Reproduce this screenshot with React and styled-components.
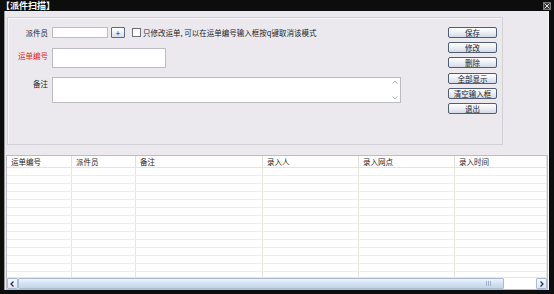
import React from 'react';
import styled, {createGlobalStyle} from 'styled-components';

const GlobalStyle = createGlobalStyle`
  html, body {
    margin: 0;
    padding: 0;
    background: #0d0d0d;
  }
  * {
    box-sizing: border-box;
  }
`;

const font = `"Noto Sans CJK SC", "Noto Sans", sans-serif`;

const Frame = styled.div`
  width: 554px;
  height: 294px;
  background: #0d0d0d;
  display: flex;
  flex-direction: column;
  font-family: ${font};
  font-size: 7.5px;
  color: #1e1e1e;
`;

const TitleBar = styled.div`
  height: 11px;
  flex-shrink: 0;
  display: flex;
  align-items: center;
  justify-content: space-between;
  padding: 0 2px 0 1px;
  color: #fff;
  font-weight: 700;
  font-size: 9px;
  line-height: 11px;
`;

const Close = styled.span`
  width: 8px;
  height: 8px;
  display: flex;
  align-items: center;
  justify-content: center;
  background: #3a3a3a;
  border: 1px solid #777;
  margin-right: 1px;
`;

const Body = styled.div`
  flex: 1;
  margin: 0 5px 4px 4px;
  background: #ebe9ee;
  box-shadow: inset 1px 0 0 #9a9a9e, inset -1px 0 0 #f6f6f8;
  display: flex;
  flex-direction: column;
  padding: 6px 1px 0 2px;
`;

const Panel = styled.div`
  width: 496px;
  height: 128px;
  margin-left: 1px;
  border: 1px solid #d3d1d8;
  box-shadow: inset 1px 1px 0 #f7f6f9;
  display: flex;
  justify-content: space-between;
  padding: 9px 5px 0 0;
`;

const Form = styled.div`
  display: grid;
  grid-template-columns: 40px auto;
  column-gap: 4px;
  grid-template-rows: 11px 20px 26px;
  row-gap: 9.5px;
  align-content: start;
`;

const Label = styled.span`
  text-align: right;
  line-height: 11px;
  margin-top: ${(p) => p.$offset || 0}px;
  color: ${(p) => (p.$red ? '#e3261f' : '#1e1e1e')};
  white-space: nowrap;
`;

const Line = styled.div`
  display: flex;
  align-items: center;
  gap: 2px;
`;

const Input = styled.div`
  width: ${(p) => p.$w}px;
  height: ${(p) => p.$h}px;
  background: #fff;
  border: 1px solid #bdbcc3;
  position: relative;
`;

const PlusButton = styled.div`
  width: 14px;
  height: 11px;
  border: 1px solid #5d6a84;
  border-radius: 1px;
  background: linear-gradient(#ffffff, #d9dfea);
  display: flex;
  align-items: center;
  justify-content: center;
  font-size: 8px;
  line-height: 1;
  margin-left: 1px;
`;

const Check = styled.div`
  width: 9px;
  height: 9px;
  border: 1px solid #6e6e78;
  background: #fff;
  margin-left: 5px;
`;

const CheckText = styled.span`
  white-space: nowrap;
  line-height: 11px;
`;

const Spin = styled.div`
  position: absolute;
  right: 1px;
  top: 2px;
  bottom: 2px;
  width: 8px;
  display: flex;
  flex-direction: column;
  justify-content: space-between;
  align-items: center;
`;

const Buttons = styled.div`
  display: flex;
  flex-direction: column;
  gap: 4.2px;
`;

const Button = styled.div`
  width: 49px;
  height: 11px;
  border: 1px solid #4f5d78;
  border-radius: 2px;
  background: linear-gradient(#ffffff 0%, #eef1f6 45%, #d3dae7 100%);
  display: flex;
  align-items: center;
  justify-content: center;
  line-height: 9px;
  white-space: nowrap;
`;

const Grid = styled.div`
  margin-top: 10px;
  width: 542px;
  height: 135px;
  background: #fff;
  border: 1px solid #bcbcc2;
  display: flex;
  flex-direction: column;
  overflow: hidden;
`;

const Table = styled.div`
  flex: 1;
  display: grid;
  grid-template-columns: 65px 64px 127px 96px 96px 92px;
  grid-template-rows: 12px;
  grid-auto-rows: 8px;
  overflow: hidden;
`;

const HeadCell = styled.div`
  padding-left: 4px;
  line-height: 12px;
  border-right: 1px solid #e4e1dc;
  border-bottom: 1px solid #e6e3de;
  white-space: nowrap;
`;

const Cell = styled.div`
  border-right: 1px solid #e8e5e0;
  border-bottom: 1px solid #f1eee8;
`;

const ScrollBar = styled.div`
  height: 12px;
  flex-shrink: 0;
  display: flex;
  background: #fff;
  border-top: 1px solid #dfe6ef;
`;

const Arrow = styled.div`
  width: 11px;
  display: flex;
  align-items: center;
  justify-content: center;
  background: linear-gradient(#f6f9fd, #dde7f3);
  border: 1px solid #a9bbd2;
  border-radius: 1px;
`;

const Track = styled.div`
  flex: 1;
  display: flex;
`;

const Thumb = styled.div`
  width: 486px;
  border: 1px solid #a9bcd4;
  border-radius: 1px;
  background: linear-gradient(#eef4fb, #d4e2f2 50%, #c3d5ea);
  display: flex;
  align-items: center;
  justify-content: flex-end;
  padding-right: 12px;
`;

const Grip = styled.div`
  width: 5px;
  height: 5px;
  background: repeating-linear-gradient(90deg, #9fb3cc 0 1px, transparent 1px 2px);
`;

const columns = ['运单编号', '派件员', '备注', '录入人', '录入网点', '录入时间'];
const buttons = ['保存', '修改', '删除', '全部显示', '清空输入框', '退出'];

const Chevron = ({dir}) => (
  <svg width="6" height="4" viewBox="0 0 6 4">
    <path
      d={dir === 'up' ? 'M0.5 3.5 L3 1 L5.5 3.5' : 'M0.5 0.5 L3 3 L5.5 0.5'}
      fill="none"
      stroke="#9fb6d2"
      strokeWidth="1"
    />
  </svg>
);

const SideArrow = ({dir}) => (
  <svg width="5" height="6" viewBox="0 0 5 6">
    <path
      d={dir === 'left' ? 'M3.5 0.5 L1 3 L3.5 5.5' : 'M1.5 0.5 L4 3 L1.5 5.5'}
      fill="none"
      stroke="#22344f"
      strokeWidth="1.3"
    />
  </svg>
);

function App() {
  const rows = Array.from({length: 14});

  return (
    <>
      <GlobalStyle />
      <Frame>
        <TitleBar>
          <span>【派件扫描】</span>
          <Close>
            <svg width="6" height="6" viewBox="0 0 6 6">
              <path d="M0.5 0.5 L5.5 5.5 M5.5 0.5 L0.5 5.5" stroke="#ddd" strokeWidth="1" />
            </svg>
          </Close>
        </TitleBar>
        <Body>
          <Panel>
            <Form>
              <Label>派件员</Label>
              <Line>
                <Input $w={56} $h={11} />
                <PlusButton>+</PlusButton>
                <Check />
                <CheckText>只修改运单, 可以在运单编号输入框按q键取消该模式</CheckText>
              </Line>
              <Label $red $offset={2}>运单编号</Label>
              <Line>
                <Input $w={114} $h={20} />
              </Line>
              <Label $offset={1}>备注</Label>
              <Line>
                <Input $w={349} $h={26}>
                  <Spin>
                    <Chevron dir="up" />
                    <Chevron dir="down" />
                  </Spin>
                </Input>
              </Line>
            </Form>
            <Buttons>
              {buttons.map((b) => (
                <Button key={b}>{b}</Button>
              ))}
            </Buttons>
          </Panel>
          <Grid>
            <Table>
              {columns.map((c) => (
                <HeadCell key={c}>{c}</HeadCell>
              ))}
              {rows.map((_, r) =>
                columns.map((c) => <Cell key={r + c} />)
              )}
            </Table>
            <ScrollBar>
              <Arrow>
                <SideArrow dir="left" />
              </Arrow>
              <Track>
                <Thumb>
                  <Grip />
                </Thumb>
              </Track>
              <Arrow>
                <SideArrow dir="right" />
              </Arrow>
            </ScrollBar>
          </Grid>
        </Body>
      </Frame>
    </>
  );
}

export default App;
